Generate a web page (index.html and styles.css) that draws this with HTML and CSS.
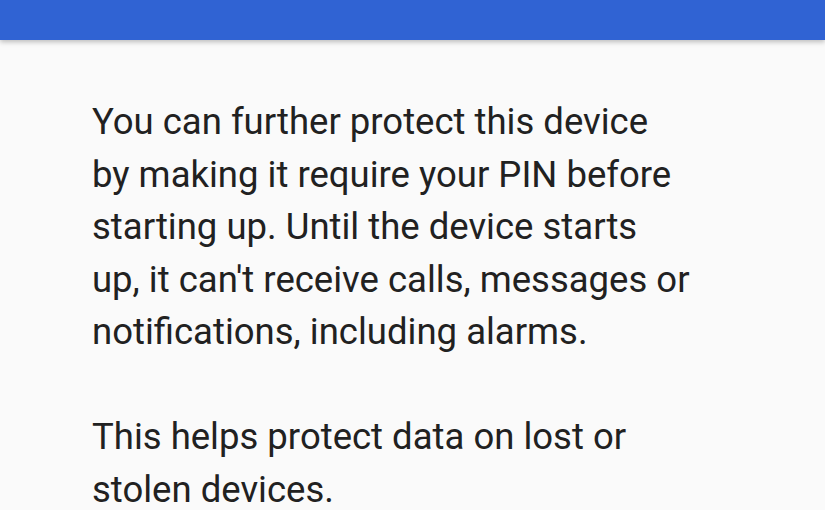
FILE: index.html
```html
<!DOCTYPE html>
<html>
<head>
  <title>Encryption</title>
  <meta http-equiv="Content-Type" content="text/html;charset=utf-8" />
  <link rel="stylesheet" href="styles.css">
</head>
<body>
  <div class="appbar"></div>
  <div class="content">
    <p>
      You can further protect this device<br>
      by making it require your PIN before<br>
      starting up. Until the device starts<br>
      up, it can't receive calls, messages or<br>
      notifications, including alarms.
    </p>
    <p>
      This helps protect data on lost or<br>
      stolen devices.
    </p>
  </div>
</body>
</html>
```

FILE: styles.css
```css
html, body {
  height: 100%;
}
body {
  margin: 0;
  background: #fafafa;
  font-family: Roboto, "Noto Sans", sans-serif;
  color: #212121;
  overflow: hidden;
}
.appbar {
  height: 40px;
  background: #3063d3;
  box-shadow: 0 2px 5px rgba(0, 0, 0, .25);
}
.content {
  padding: 56px 0 0 92px;
}
.content p {
  margin: 0;
  font-size: 36.5px;
  line-height: 52.5px;
  white-space: nowrap;
}
.content p + p {
  margin-top: 52.5px;
}
```
